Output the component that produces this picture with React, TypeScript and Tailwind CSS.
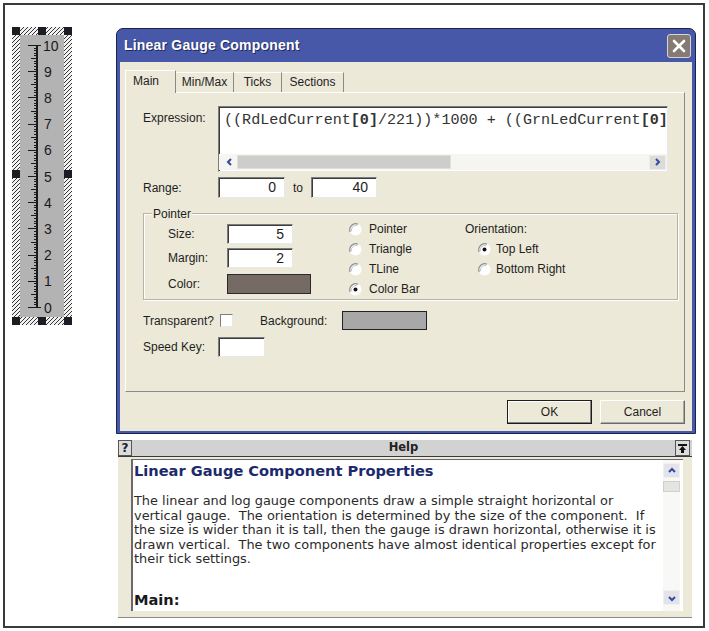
import React from 'react';

function Gauge() {
  const ticks = [];
  for (let i = 0; i <= 100; i++) {
    const y = Math.round(18 + i * 2.62) + 0.5;
    let x1 = 22;
    if (i % 10 === 0) x1 = 16;
    else if (i % 5 === 0) x1 = 19;
    ticks.push(<line key={i} x1={x1} x2={25} y1={y} y2={y} stroke="#1a1a1a" strokeWidth={1} />);
  }
  const labels = [];
  for (let n = 0; n <= 10; n++) {
    labels.push(
      <text key={n} x={n === 10 ? 31 : 32} y={18 + (10 - n) * 26.2 + 0.5} dominantBaseline="central" fontSize={14} fill="#1a1a1a" fontFamily="Liberation Sans, Arial, sans-serif">
        {n}
      </text>
    );
  }
  const handles = [
    [0, 0], [26, 0], [52, 0], [0, 143], [52, 143], [0, 290], [26, 290], [52, 290],
  ];
  return (
    <svg width={60} height={298} viewBox="0 0 60 298" className="block">
      <defs>
        <pattern id="hatch" width={4} height={4} patternUnits="userSpaceOnUse">
          <rect width={4} height={4} fill="#f2f2f2" />
          <path d="M-1,1 l2,-2 M0,4 l4,-4 M3,5 l2,-2" stroke="#333" strokeWidth={1} />
        </pattern>
      </defs>
      <rect x={0} y={0} width={60} height={298} fill="url(#hatch)" />
      <rect x={8} y={8} width={44} height={282} fill="#b3b3b3" />
      {ticks}
      <line x1={25} x2={25} y1={18} y2={281} stroke="#1a1a1a" strokeWidth={2} />
      <line x1={16} x2={29} y1={18.5} y2={18.5} stroke="#1a1a1a" strokeWidth={1} />
      <line x1={16} x2={29} y1={280.5} y2={280.5} stroke="#1a1a1a" strokeWidth={1} />
      {labels}
      {handles.map(([x, y], i) => (
        <rect key={i} x={x} y={y} width={8} height={8} fill="#1c1c24" />
      ))}
    </svg>
  );
}

function Radio({ checked }: { checked?: boolean }) {
  return (
    <svg width={13} height={13} viewBox="0 0 13 13" className="shrink-0">
      <circle cx={6.5} cy={6.5} r={6} fill="#fff" />
      <path d="M1.2,9 A6,6 0 0 1 9,1.2" fill="none" stroke="#8c8c8c" strokeWidth={1.2} />
      <path d="M2.6,8.2 A4.5,4.5 0 0 1 8.2,2.6" fill="none" stroke="#c8c8c8" strokeWidth={1} />
      {checked && <circle cx={6.5} cy={6.5} r={2} fill="#111" />}
    </svg>
  );
}

function Field({ className, children }: { className: string; children?: React.ReactNode }) {
  return (
    <div className={`bg-white border border-t-[#7c7c7c] border-l-[#7c7c7c] border-r-[#e8e8e8] border-b-[#e8e8e8] shadow-[inset_1px_1px_0_#3c3c3c] flex items-center justify-end pr-[8px] text-[14px] ${className}`}>
      {children}
    </div>
  );
}

function Chevron({ dir }: { dir: 'left' | 'right' | 'up' | 'down' }) {
  const d = {
    left: 'M6,2 L3,5 L6,8',
    right: 'M3,2 L6,5 L3,8',
    up: 'M2,6 L5,3 L8,6',
    down: 'M2,4 L5,7 L8,4',
  }[dir];
  return (
    <svg width={10} height={10} viewBox="0 0 10 10">
      <path d={d} fill="none" stroke="#3348a8" strokeWidth={2} />
    </svg>
  );
}

function Dialog() {
  return (
    <div className="w-[580px] rounded-t-[7px] bg-[#4858a8] border border-[#1a2250] px-[3px] pb-[2px]">
      <div className="h-[33px] flex items-center justify-between pl-[4px] pr-[1px]">
        <span className="text-white font-bold text-[14px] tracking-[0.2px] [text-shadow:1px_1px_0_#20285a]">Linear Gauge Component</span>
        <div className="w-[24px] h-[24px] rounded-[3px] bg-[#857b74] border border-[#d8d4d0] flex items-center justify-center">
          <svg width={14} height={14} viewBox="0 0 14 14">
            <path d="M2,2 L12,12 M12,2 L2,12" stroke="#fff" strokeWidth={2.6} strokeLinecap="round" />
          </svg>
        </div>
      </div>
      <div className="bg-[#ece9d8] pt-[7px] pl-[5px] pr-[6px] pb-[7px]">
        {/* tabs */}
        <div className="flex items-end h-[23px] relative z-10">
          <div className="w-[51px] h-[23px] -mb-px bg-[#ece9d8] border-l border-t border-white border-r border-r-[#8a8a8a] flex items-center pl-[7px] pb-[2px]">Main</div>
          <div className="w-[58px] h-[20px] border-t border-white border-r border-r-[#8a8a8a] flex items-center justify-center pb-[1px]">Min/Max</div>
          <div className="w-[48px] h-[20px] border-t border-white border-r border-r-[#8a8a8a] flex items-center justify-center pb-[1px]">Ticks</div>
          <div className="w-[62px] h-[20px] border-t border-white border-r border-r-[#8a8a8a] flex items-center justify-center pb-[1px]">Sections</div>
        </div>
        {/* tab panel */}
        <div className="w-[560px] h-[300px] border border-white border-r-[#8a8a8a] border-b-[#8a8a8a] pl-[17px] pt-[13px]">
          <div className="flex items-start">
            <div className="w-[75px] pt-[3px]">Expression:</div>
            <div className="w-[450px] h-[66px] bg-white border border-t-[#7c7c7c] border-l-[#7c7c7c] border-r-[#e8e8e8] border-b-[#e8e8e8] shadow-[inset_1px_1px_0_#3c3c3c] flex flex-col overflow-hidden">
              <div className="font-['Liberation_Mono',monospace] text-[15.1px] text-[#333] pl-[5px] pt-[3px] whitespace-pre leading-[20px]">
                ((RdLedCurrent<b>[0]</b>/221))*1000 + ((GrnLedCurrent<b>[0]</b>
              </div>
              <div className="mt-auto mb-[1px] h-[16px] bg-[#f6f5ef] flex items-center pl-[6px] pr-[1px]">
                <Chevron dir="left" />
                <div className="ml-[2px] w-[214px] h-[14px] bg-[#cdcdcb] border border-[#e0e0dc]" />
                <div className="ml-auto w-[17px] h-[15px] bg-[#dcdcd6] border border-[#ececec] flex items-center justify-center">
                  <Chevron dir="right" />
                </div>
              </div>
            </div>
          </div>
          <div className="flex items-center mt-[5px]">
            <div className="w-[75px]">Range:</div>
            <Field className="w-[67px] h-[21px]">0</Field>
            <span className="ml-[8px] mr-[8px]">to</span>
            <Field className="w-[66px] h-[21px]">40</Field>
          </div>
          {/* pointer group */}
          <div className="relative mt-[15px] w-[535px] h-[87px] border border-[#b4b4ac] shadow-[inset_1px_1px_0_#fff,1px_1px_0_#fff] flex">
            <span className="absolute -top-[9px] left-[8px] px-[1px] bg-[#ece9d8]">Pointer</span>
            <div className="ml-[24px] pt-[10px] flex flex-col">
              <div className="flex items-center h-[20px]">
                <div className="w-[59px]">Size:</div>
                <Field className="w-[66px] h-[20px]">5</Field>
              </div>
              <div className="flex items-center h-[20px] mt-[4px]">
                <div className="w-[59px]">Margin:</div>
                <Field className="w-[66px] h-[20px]">2</Field>
              </div>
              <div className="flex items-center h-[20px] mt-[6px]">
                <div className="w-[59px]">Color:</div>
                <div className="w-[84px] h-[20px] bg-[#766a64] border border-[#2a2a2a]" />
              </div>
            </div>
            <div className="ml-[38px] pt-[5px] w-[116px] flex flex-col">
              {['Pointer', 'Triangle', 'TLine', 'Color Bar'].map((t, i) => (
                <div key={t} className="flex items-center h-[20px] gap-[7px]">
                  <Radio checked={i === 3} />
                  <span>{t}</span>
                </div>
              ))}
            </div>
            <div className="pt-[5px] flex flex-col">
              <div className="h-[20px] flex items-center">Orientation:</div>
              <div className="flex items-center h-[20px] gap-[5px] pl-[13px]">
                <Radio checked />
                <span>Top Left</span>
              </div>
              <div className="flex items-center h-[20px] gap-[5px] pl-[13px]">
                <Radio />
                <span>Bottom Right</span>
              </div>
            </div>
          </div>
          <div className="flex items-center mt-[11px] h-[19px]">
            <div className="w-[77px]">Transparent?</div>
            <div className="w-[13px] h-[13px] bg-white border border-t-[#7c7c7c] border-l-[#7c7c7c] border-r-[#e8e8e8] border-b-[#e8e8e8]" />
            <div className="ml-[27px] w-[82px]">Background:</div>
            <div className="w-[85px] h-[19px] bg-[#a8a8a8] border border-[#222]" />
          </div>
          <div className="flex items-center mt-[7px]">
            <div className="w-[75px]">Speed Key:</div>
            <Field className="w-[47px] h-[20px]" />
          </div>
        </div>
        {/* buttons */}
        <div className="flex justify-end gap-[8px] mt-[8px] w-[560px]">
          <button className="w-[85px] h-[24px] bg-[#ece9d8] border border-[#1c1c1c] shadow-[inset_-1px_-1px_0_#808080,inset_1px_1px_0_#fff] text-[12px]">OK</button>
          <button className="w-[85px] h-[24px] bg-[#ece9d8] border border-white border-r-[#6a6a6a] border-b-[#6a6a6a] shadow-[inset_-1px_-1px_0_#a8a8a8] text-[12px]">Cancel</button>
        </div>
      </div>
    </div>
  );
}

function Help() {
  return (
    <div className="ml-[2px] mt-[6px] w-[574px] h-[178px] flex flex-col bg-[#ece9d8] border-b border-[#8a8a8a]">
      <div className="h-[17px] flex items-stretch bg-[#d2d2d2] border-b border-[#3a3a3a] font-['DejaVu_Sans',Verdana,sans-serif]">
        <div className="w-[14px] border border-[#555] bg-[#dcdcdc] flex items-center justify-center font-bold text-[12px] text-[#222]">?</div>
        <div className="flex-1 flex items-center justify-center font-bold text-[11.5px] text-[#222]">Help</div>
        <div className="w-[15px] border border-[#555] bg-[#dcdcdc] flex items-center justify-center mr-[2px]">
          <svg width={11} height={11} viewBox="0 0 11 11">
            <rect x={1} y={1} width={9} height={2} fill="#111" />
            <path d="M5.5,3 L9,7 L7,7 L7,10 L4,10 L4,7 L2,7 Z" fill="#111" />
          </svg>
        </div>
      </div>
      <div className="flex-1 pl-[13px] pr-[9px] pt-[2px] pb-[6px]">
        <div className="h-full bg-white border-l-2 border-t border-[#6a6a6a] flex overflow-hidden">
          <div className="flex-1 pl-[1px] pt-[2px] font-['DejaVu_Sans',Verdana,sans-serif] text-[#2a2a2a]">
            <div className="text-[14.6px] leading-[18px] font-bold text-[#1c2a6c]">Linear Gauge Component Properties</div>
            <div className="mt-[14px] text-[12.9px] leading-[14.5px] whitespace-pre">
              {'The linear and log gauge components draw a simple straight horizontal or\nvertical gauge.  The orientation is determined by the size of the component.  If\nthe size is wider than it is tall, then the gauge is drawn horizontal, otherwise it is\ndrawn vertical.  The two components have almost identical properties except for\ntheir tick settings.'}
            </div>
            <div className="mt-[24px] text-[14.6px] leading-[18px] font-bold text-[#1a1a1a]">Main:</div>
          </div>
          <div className="w-[17px] mr-[3px] flex flex-col pt-[3px] pb-[6px] bg-[#f8f8f6]">
            <div className="h-[15px] bg-[#e2e4ea] border border-[#f0f0f0] flex items-center justify-center">
              <Chevron dir="up" />
            </div>
            <div className="mt-[3px] h-[11px] bg-[#e4e4e0] border border-[#d0d0cc]" />
            <div className="mt-auto h-[15px] bg-[#e2e4ea] border border-[#f0f0f0] flex items-center justify-center">
              <Chevron dir="down" />
            </div>
          </div>
        </div>
      </div>
    </div>
  );
}

export default function App() {
  return (
    <div className="w-[709px] h-[631px] bg-white p-[3px] font-['Liberation_Sans',Arial,sans-serif] text-[12px] text-[#1e1e1e]">
      <div className="w-[702px] h-[625px] border-2 border-[#3a3a3a] flex items-start">
        <div className="ml-[7px] mt-[22px]">
          <Gauge />
        </div>
        <div className="ml-[44px] mt-[23px] flex flex-col">
          <Dialog />
          <Help />
        </div>
      </div>
    </div>
  );
}
